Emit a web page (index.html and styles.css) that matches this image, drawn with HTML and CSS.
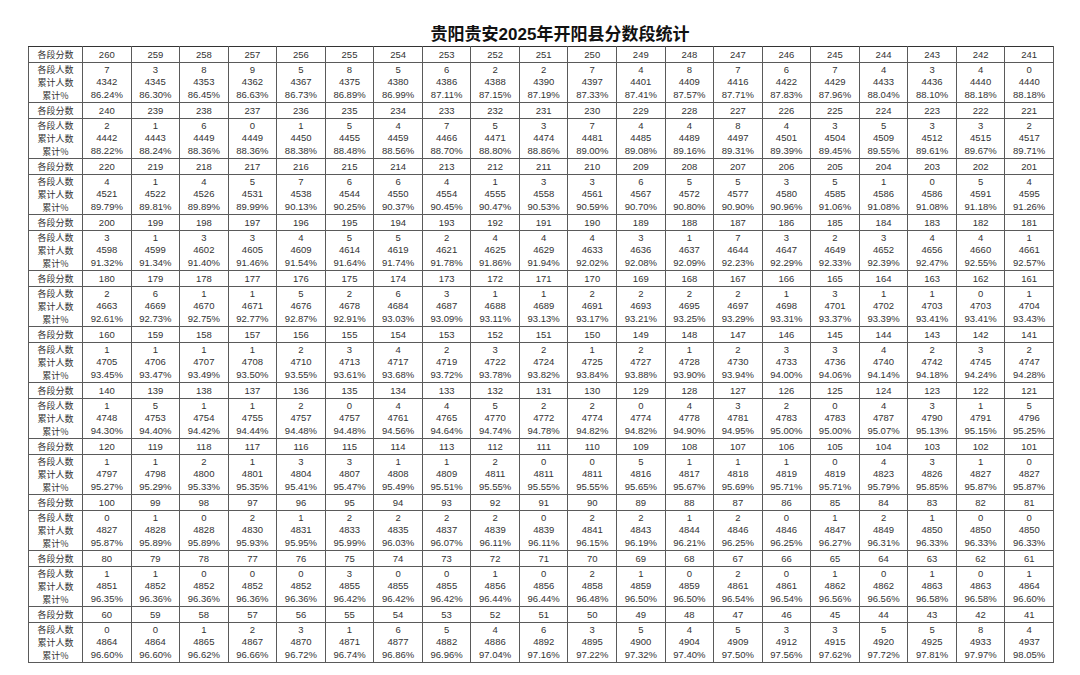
FILE: index.html
```html
<!DOCTYPE html>
<html lang="zh-CN">
<head>
<meta charset="utf-8">
<title>贵阳贵安2025年开阳县分数段统计</title>
<link rel="stylesheet" href="styles.css">
</head>
<body>
<div class="page">
<h1 class="title">贵阳贵安2025年开阳县分数段统计</h1>
<table class="grid">
<colgroup><col class="c-label"><col span="20"></colgroup>
<tbody>
<tr class="hd"><th>各段分数</th><td>260</td><td>259</td><td>258</td><td>257</td><td>256</td><td>255</td><td>254</td><td>253</td><td>252</td><td>251</td><td>250</td><td>249</td><td>248</td><td>247</td><td>246</td><td>245</td><td>244</td><td>243</td><td>242</td><td>241</td></tr>
<tr class="dt"><th>各段人数<br>累计人数<br>累计%</th><td>7<br>4342<br>86.24%</td><td>3<br>4345<br>86.30%</td><td>8<br>4353<br>86.45%</td><td>9<br>4362<br>86.63%</td><td>5<br>4367<br>86.73%</td><td>8<br>4375<br>86.89%</td><td>5<br>4380<br>86.99%</td><td>6<br>4386<br>87.11%</td><td>2<br>4388<br>87.15%</td><td>2<br>4390<br>87.19%</td><td>7<br>4397<br>87.33%</td><td>4<br>4401<br>87.41%</td><td>8<br>4409<br>87.57%</td><td>7<br>4416<br>87.71%</td><td>6<br>4422<br>87.83%</td><td>7<br>4429<br>87.96%</td><td>4<br>4433<br>88.04%</td><td>3<br>4436<br>88.10%</td><td>4<br>4440<br>88.18%</td><td>0<br>4440<br>88.18%</td></tr>

<tr class="hd"><th>各段分数</th><td>240</td><td>239</td><td>238</td><td>237</td><td>236</td><td>235</td><td>234</td><td>233</td><td>232</td><td>231</td><td>230</td><td>229</td><td>228</td><td>227</td><td>226</td><td>225</td><td>224</td><td>223</td><td>222</td><td>221</td></tr>
<tr class="dt"><th>各段人数<br>累计人数<br>累计%</th><td>2<br>4442<br>88.22%</td><td>1<br>4443<br>88.24%</td><td>6<br>4449<br>88.36%</td><td>0<br>4449<br>88.36%</td><td>1<br>4450<br>88.38%</td><td>5<br>4455<br>88.48%</td><td>4<br>4459<br>88.56%</td><td>7<br>4466<br>88.70%</td><td>5<br>4471<br>88.80%</td><td>3<br>4474<br>88.86%</td><td>7<br>4481<br>89.00%</td><td>4<br>4485<br>89.08%</td><td>4<br>4489<br>89.16%</td><td>8<br>4497<br>89.31%</td><td>4<br>4501<br>89.39%</td><td>3<br>4504<br>89.45%</td><td>5<br>4509<br>89.55%</td><td>3<br>4512<br>89.61%</td><td>3<br>4515<br>89.67%</td><td>2<br>4517<br>89.71%</td></tr>

<tr class="hd"><th>各段分数</th><td>220</td><td>219</td><td>218</td><td>217</td><td>216</td><td>215</td><td>214</td><td>213</td><td>212</td><td>211</td><td>210</td><td>209</td><td>208</td><td>207</td><td>206</td><td>205</td><td>204</td><td>203</td><td>202</td><td>201</td></tr>
<tr class="dt"><th>各段人数<br>累计人数<br>累计%</th><td>4<br>4521<br>89.79%</td><td>1<br>4522<br>89.81%</td><td>4<br>4526<br>89.89%</td><td>5<br>4531<br>89.99%</td><td>7<br>4538<br>90.13%</td><td>6<br>4544<br>90.25%</td><td>6<br>4550<br>90.37%</td><td>4<br>4554<br>90.45%</td><td>1<br>4555<br>90.47%</td><td>3<br>4558<br>90.53%</td><td>3<br>4561<br>90.59%</td><td>6<br>4567<br>90.70%</td><td>5<br>4572<br>90.80%</td><td>5<br>4577<br>90.90%</td><td>3<br>4580<br>90.96%</td><td>5<br>4585<br>91.06%</td><td>1<br>4586<br>91.08%</td><td>0<br>4586<br>91.08%</td><td>5<br>4591<br>91.18%</td><td>4<br>4595<br>91.26%</td></tr>

<tr class="hd"><th>各段分数</th><td>200</td><td>199</td><td>198</td><td>197</td><td>196</td><td>195</td><td>194</td><td>193</td><td>192</td><td>191</td><td>190</td><td>189</td><td>188</td><td>187</td><td>186</td><td>185</td><td>184</td><td>183</td><td>182</td><td>181</td></tr>
<tr class="dt"><th>各段人数<br>累计人数<br>累计%</th><td>3<br>4598<br>91.32%</td><td>1<br>4599<br>91.34%</td><td>3<br>4602<br>91.40%</td><td>3<br>4605<br>91.46%</td><td>4<br>4609<br>91.54%</td><td>5<br>4614<br>91.64%</td><td>5<br>4619<br>91.74%</td><td>2<br>4621<br>91.78%</td><td>4<br>4625<br>91.86%</td><td>4<br>4629<br>91.94%</td><td>4<br>4633<br>92.02%</td><td>3<br>4636<br>92.08%</td><td>1<br>4637<br>92.09%</td><td>7<br>4644<br>92.23%</td><td>3<br>4647<br>92.29%</td><td>2<br>4649<br>92.33%</td><td>3<br>4652<br>92.39%</td><td>4<br>4656<br>92.47%</td><td>4<br>4660<br>92.55%</td><td>1<br>4661<br>92.57%</td></tr>

<tr class="hd"><th>各段分数</th><td>180</td><td>179</td><td>178</td><td>177</td><td>176</td><td>175</td><td>174</td><td>173</td><td>172</td><td>171</td><td>170</td><td>169</td><td>168</td><td>167</td><td>166</td><td>165</td><td>164</td><td>163</td><td>162</td><td>161</td></tr>
<tr class="dt"><th>各段人数<br>累计人数<br>累计%</th><td>2<br>4663<br>92.61%</td><td>6<br>4669<br>92.73%</td><td>1<br>4670<br>92.75%</td><td>1<br>4671<br>92.77%</td><td>5<br>4676<br>92.87%</td><td>2<br>4678<br>92.91%</td><td>6<br>4684<br>93.03%</td><td>3<br>4687<br>93.09%</td><td>1<br>4688<br>93.11%</td><td>1<br>4689<br>93.13%</td><td>2<br>4691<br>93.17%</td><td>2<br>4693<br>93.21%</td><td>2<br>4695<br>93.25%</td><td>2<br>4697<br>93.29%</td><td>1<br>4698<br>93.31%</td><td>3<br>4701<br>93.37%</td><td>1<br>4702<br>93.39%</td><td>1<br>4703<br>93.41%</td><td>0<br>4703<br>93.41%</td><td>1<br>4704<br>93.43%</td></tr>

<tr class="hd"><th>各段分数</th><td>160</td><td>159</td><td>158</td><td>157</td><td>156</td><td>155</td><td>154</td><td>153</td><td>152</td><td>151</td><td>150</td><td>149</td><td>148</td><td>147</td><td>146</td><td>145</td><td>144</td><td>143</td><td>142</td><td>141</td></tr>
<tr class="dt"><th>各段人数<br>累计人数<br>累计%</th><td>1<br>4705<br>93.45%</td><td>1<br>4706<br>93.47%</td><td>1<br>4707<br>93.49%</td><td>1<br>4708<br>93.50%</td><td>2<br>4710<br>93.55%</td><td>3<br>4713<br>93.61%</td><td>4<br>4717<br>93.68%</td><td>2<br>4719<br>93.72%</td><td>3<br>4722<br>93.78%</td><td>2<br>4724<br>93.82%</td><td>1<br>4725<br>93.84%</td><td>2<br>4727<br>93.88%</td><td>1<br>4728<br>93.90%</td><td>2<br>4730<br>93.94%</td><td>3<br>4733<br>94.00%</td><td>3<br>4736<br>94.06%</td><td>4<br>4740<br>94.14%</td><td>2<br>4742<br>94.18%</td><td>3<br>4745<br>94.24%</td><td>2<br>4747<br>94.28%</td></tr>

<tr class="hd"><th>各段分数</th><td>140</td><td>139</td><td>138</td><td>137</td><td>136</td><td>135</td><td>134</td><td>133</td><td>132</td><td>131</td><td>130</td><td>129</td><td>128</td><td>127</td><td>126</td><td>125</td><td>124</td><td>123</td><td>122</td><td>121</td></tr>
<tr class="dt"><th>各段人数<br>累计人数<br>累计%</th><td>1<br>4748<br>94.30%</td><td>5<br>4753<br>94.40%</td><td>1<br>4754<br>94.42%</td><td>1<br>4755<br>94.44%</td><td>2<br>4757<br>94.48%</td><td>0<br>4757<br>94.48%</td><td>4<br>4761<br>94.56%</td><td>4<br>4765<br>94.64%</td><td>5<br>4770<br>94.74%</td><td>2<br>4772<br>94.78%</td><td>2<br>4774<br>94.82%</td><td>0<br>4774<br>94.82%</td><td>4<br>4778<br>94.90%</td><td>3<br>4781<br>94.95%</td><td>2<br>4783<br>95.00%</td><td>0<br>4783<br>95.00%</td><td>4<br>4787<br>95.07%</td><td>3<br>4790<br>95.13%</td><td>1<br>4791<br>95.15%</td><td>5<br>4796<br>95.25%</td></tr>

<tr class="hd"><th>各段分数</th><td>120</td><td>119</td><td>118</td><td>117</td><td>116</td><td>115</td><td>114</td><td>113</td><td>112</td><td>111</td><td>110</td><td>109</td><td>108</td><td>107</td><td>106</td><td>105</td><td>104</td><td>103</td><td>102</td><td>101</td></tr>
<tr class="dt"><th>各段人数<br>累计人数<br>累计%</th><td>1<br>4797<br>95.27%</td><td>1<br>4798<br>95.29%</td><td>2<br>4800<br>95.33%</td><td>1<br>4801<br>95.35%</td><td>3<br>4804<br>95.41%</td><td>3<br>4807<br>95.47%</td><td>1<br>4808<br>95.49%</td><td>1<br>4809<br>95.51%</td><td>2<br>4811<br>95.55%</td><td>0<br>4811<br>95.55%</td><td>0<br>4811<br>95.55%</td><td>5<br>4816<br>95.65%</td><td>1<br>4817<br>95.67%</td><td>1<br>4818<br>95.69%</td><td>1<br>4819<br>95.71%</td><td>0<br>4819<br>95.71%</td><td>4<br>4823<br>95.79%</td><td>3<br>4826<br>95.85%</td><td>1<br>4827<br>95.87%</td><td>0<br>4827<br>95.87%</td></tr>

<tr class="hd"><th>各段分数</th><td>100</td><td>99</td><td>98</td><td>97</td><td>96</td><td>95</td><td>94</td><td>93</td><td>92</td><td>91</td><td>90</td><td>89</td><td>88</td><td>87</td><td>86</td><td>85</td><td>84</td><td>83</td><td>82</td><td>81</td></tr>
<tr class="dt"><th>各段人数<br>累计人数<br>累计%</th><td>0<br>4827<br>95.87%</td><td>1<br>4828<br>95.89%</td><td>0<br>4828<br>95.89%</td><td>2<br>4830<br>95.93%</td><td>1<br>4831<br>95.95%</td><td>2<br>4833<br>95.99%</td><td>2<br>4835<br>96.03%</td><td>2<br>4837<br>96.07%</td><td>2<br>4839<br>96.11%</td><td>0<br>4839<br>96.11%</td><td>2<br>4841<br>96.15%</td><td>2<br>4843<br>96.19%</td><td>1<br>4844<br>96.21%</td><td>2<br>4846<br>96.25%</td><td>0<br>4846<br>96.25%</td><td>1<br>4847<br>96.27%</td><td>2<br>4849<br>96.31%</td><td>1<br>4850<br>96.33%</td><td>0<br>4850<br>96.33%</td><td>0<br>4850<br>96.33%</td></tr>

<tr class="hd"><th>各段分数</th><td>80</td><td>79</td><td>78</td><td>77</td><td>76</td><td>75</td><td>74</td><td>73</td><td>72</td><td>71</td><td>70</td><td>69</td><td>68</td><td>67</td><td>66</td><td>65</td><td>64</td><td>63</td><td>62</td><td>61</td></tr>
<tr class="dt"><th>各段人数<br>累计人数<br>累计%</th><td>1<br>4851<br>96.35%</td><td>1<br>4852<br>96.36%</td><td>0<br>4852<br>96.36%</td><td>0<br>4852<br>96.36%</td><td>0<br>4852<br>96.36%</td><td>3<br>4855<br>96.42%</td><td>0<br>4855<br>96.42%</td><td>0<br>4855<br>96.42%</td><td>1<br>4856<br>96.44%</td><td>0<br>4856<br>96.44%</td><td>2<br>4858<br>96.48%</td><td>1<br>4859<br>96.50%</td><td>0<br>4859<br>96.50%</td><td>2<br>4861<br>96.54%</td><td>0<br>4861<br>96.54%</td><td>1<br>4862<br>96.56%</td><td>0<br>4862<br>96.56%</td><td>1<br>4863<br>96.58%</td><td>0<br>4863<br>96.58%</td><td>1<br>4864<br>96.60%</td></tr>

<tr class="hd"><th>各段分数</th><td>60</td><td>59</td><td>58</td><td>57</td><td>56</td><td>55</td><td>54</td><td>53</td><td>52</td><td>51</td><td>50</td><td>49</td><td>48</td><td>47</td><td>46</td><td>45</td><td>44</td><td>43</td><td>42</td><td>41</td></tr>
<tr class="dt"><th>各段人数<br>累计人数<br>累计%</th><td>0<br>4864<br>96.60%</td><td>0<br>4864<br>96.60%</td><td>1<br>4865<br>96.62%</td><td>2<br>4867<br>96.66%</td><td>3<br>4870<br>96.72%</td><td>1<br>4871<br>96.74%</td><td>6<br>4877<br>96.86%</td><td>5<br>4882<br>96.96%</td><td>4<br>4886<br>97.04%</td><td>6<br>4892<br>97.16%</td><td>3<br>4895<br>97.22%</td><td>5<br>4900<br>97.32%</td><td>4<br>4904<br>97.40%</td><td>5<br>4909<br>97.50%</td><td>3<br>4912<br>97.56%</td><td>3<br>4915<br>97.62%</td><td>5<br>4920<br>97.72%</td><td>5<br>4925<br>97.81%</td><td>8<br>4933<br>97.97%</td><td>4<br>4937<br>98.05%</td></tr>
</tbody>
</table>
</div>
</body>
</html>
```

FILE: styles.css
```css
html, body {
  margin: 0;
  padding: 0;
  background: #ffffff;
}

.page {
  padding: 24px 0 0 28px;
  width: 1026px;
}

.title {
  margin: 0;
  padding-left: 38px;
  height: 22px;
  line-height: 22px;
  font-family: "Liberation Sans", "Noto Sans CJK SC", sans-serif;
  font-size: 17px;
  font-weight: 700;
  color: #111111;
  text-align: center;
}

.grid {
  width: 1026px;
  border-collapse: collapse;
  table-layout: fixed;
  font-family: "Liberation Sans", "Noto Sans CJK SC", sans-serif;
  font-size: 9.5px;
  color: #333333;
  border: 1px solid #444444;
}

.c-label {
  width: 54px;
}

.grid th,
.grid td {
  border: 1px solid #5a5a5a;
  padding: 0;
  text-align: center;
  vertical-align: middle;
  font-weight: 400;
}

.grid th {
  font-family: "Noto Sans CJK SC", "Liberation Sans", sans-serif;
  font-size: 9px;
}

.hd th,
.hd td {
  height: 15px;
  line-height: 14px;
  border-top: 1px solid #333333;
}

.dt td {
  height: 39px;
  line-height: 12.4px;
}

.dt th {
  height: 39px;
  line-height: 13px;
}
```
